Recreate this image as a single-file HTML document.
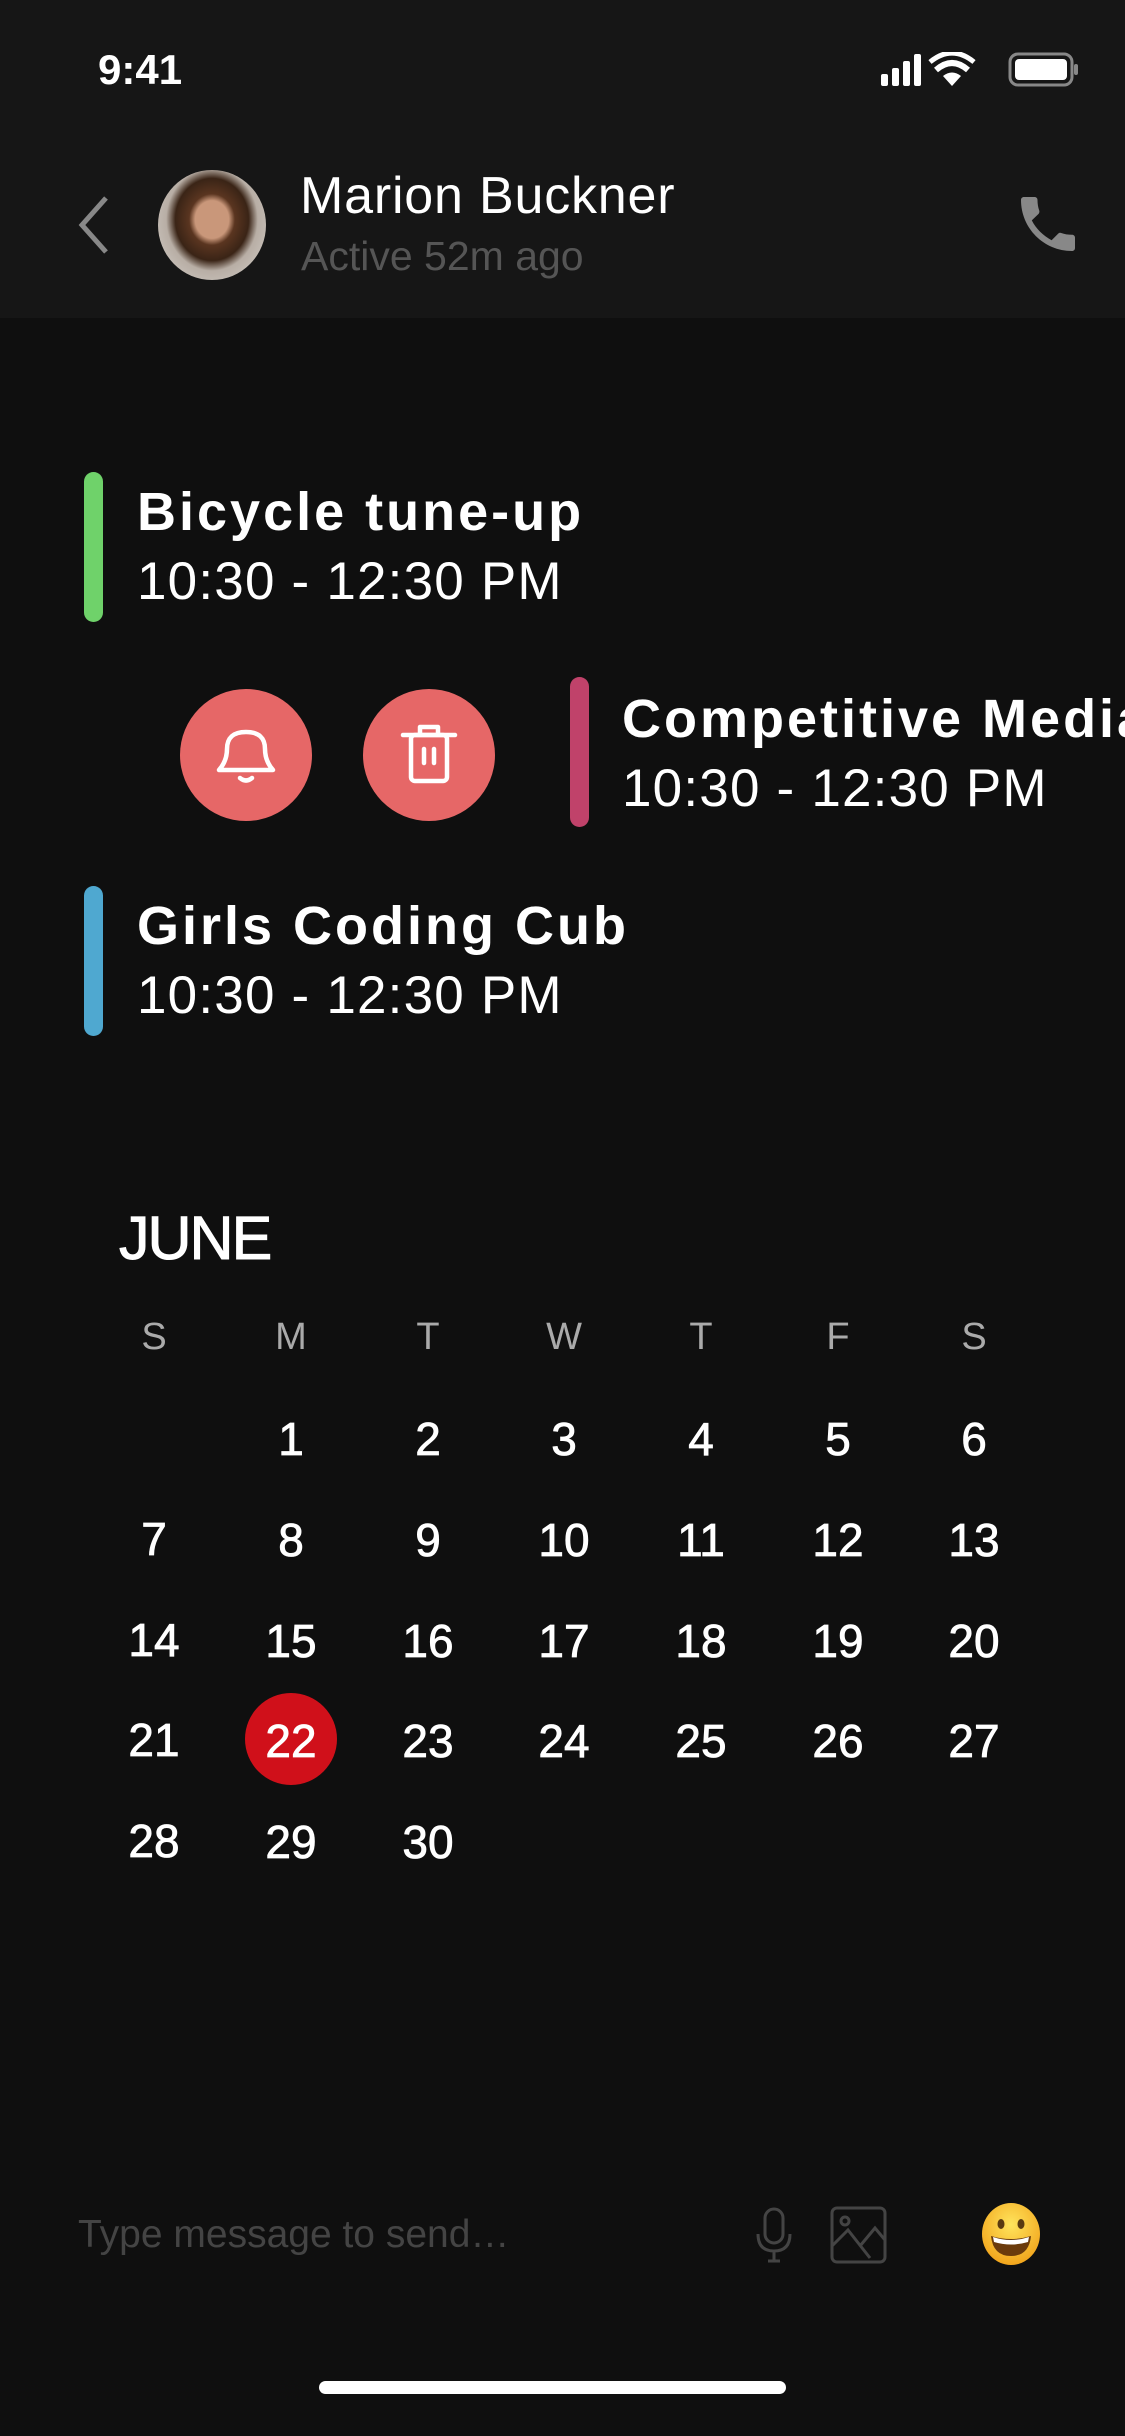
<!DOCTYPE html>
<html><head><meta charset="utf-8"><style>
*{margin:0;padding:0;box-sizing:border-box}
body{width:1125px;height:2436px;background:#0f0f0f;position:relative;overflow:hidden;font-family:"Liberation Sans",sans-serif;color:#fff}
.a{position:absolute}
.hdr{left:0;top:0;width:1125px;height:318px;background:#161616}
.bar{width:19px;border-radius:10px}
.t{font-weight:700;font-size:54px;letter-spacing:3px;white-space:nowrap;line-height:1}
.tm{font-size:53px;letter-spacing:1.2px;white-space:nowrap;line-height:1}
.wd{font-size:38px;color:#aaa;width:100px;text-align:center;line-height:1}
.d{font-size:46px;width:100px;text-align:center;line-height:1;-webkit-text-stroke:0.8px #fff}
.btn{width:132px;height:132px;border-radius:50%;background:#e66767}
</style></head><body>
<div class="a hdr"></div>
<div class="a" style="left:98px;top:46px;font-size:42px;font-weight:600">9:41</div>
<svg class="a" style="left:880px;top:52px" width="200" height="36" viewBox="0 0 200 36">
<rect x="1" y="22" width="7" height="12" rx="2" fill="#fff"/><rect x="12" y="16" width="7" height="18" rx="2" fill="#fff"/><rect x="23" y="9" width="7" height="25" rx="2" fill="#fff"/><rect x="34" y="2" width="7" height="32" rx="2" fill="#fff"/>
<path d="M72 34 L63 24 Q72 17 81 24 Z" fill="#fff"/><path d="M56 18 Q72 4 88 18" stroke="#fff" stroke-width="6" fill="none"/><path d="M50 10 Q72 -8 94 10" stroke="#fff" stroke-width="5" fill="none"/>
<rect x="130" y="2" width="62" height="31" rx="8" stroke="#888" stroke-width="3" fill="none"/><rect x="135" y="7" width="52" height="21" rx="4" fill="#fff"/><rect x="194" y="12" width="4" height="11" rx="2" fill="#888"/>
</svg>
<svg class="a" style="left:74px;top:194px" width="40" height="62"><path d="M32 4 L8 31 L32 58" stroke="#888" stroke-width="5" fill="none"/></svg>
<div class="a" style="left:158px;top:170px;width:108px;height:110px;border-radius:50%;background:radial-gradient(ellipse at 50% 45%,#c9977a 0 22%,#5a3520 30%,#3a2416 48%,#b8aea5 60%,#d8d4cf 100%)"></div>
<div class="a" style="left:300px;top:170px;font-size:52px;letter-spacing:0.8px;line-height:1">Marion Buckner</div>
<div class="a" style="left:301px;top:236px;font-size:41px;color:#555;line-height:1">Active 52m ago</div>
<svg class="a" style="left:1012px;top:188px" width="72" height="72" viewBox="0 0 24 24"><path fill="#888" d="M6.6 10.8c1.4 2.8 3.8 5.1 6.6 6.6l2.2-2.2c.3-.3.7-.4 1-.2 1.1.4 2.3.6 3.6.6.6 0 1 .4 1 1V20c0 .6-.4 1-1 1C10.6 21 3 13.4 3 4c0-.6.4-1 1-1h3.5c.6 0 1 .4 1 1 0 1.3.2 2.5.6 3.6.1.3 0 .7-.2 1z"/></svg>

<div class="a bar" style="left:84px;top:472px;height:150px;background:#6fd26a"></div>
<div class="a t" style="left:137px;top:485px">Bicycle tune-up</div>
<div class="a tm" style="left:137px;top:555px">10:30 - 12:30 PM</div>

<div class="a btn" style="left:180px;top:689px"></div>
<svg class="a" style="left:210px;top:719px" width="72" height="72" viewBox="0 0 72 72"><path d="M9 51 Q17 42 17 30 Q17 13 36 13 Q55 13 55 30 Q55 42 63 51 Z" stroke="#fff" stroke-width="4.5" fill="none" stroke-linejoin="round"/><path d="M30 59 Q36 64 42 59" stroke="#fff" stroke-width="4.5" fill="none" stroke-linecap="round"/></svg>
<div class="a btn" style="left:363px;top:689px"></div>
<svg class="a" style="left:393px;top:719px" width="72" height="72" viewBox="0 0 72 72"><path d="M10 16 H62" stroke="#fff" stroke-width="4.5" stroke-linecap="round"/><path d="M27 16 V8 H45 V16" stroke="#fff" stroke-width="4.5" fill="none" stroke-linejoin="round"/><rect x="18" y="16" width="36" height="46" rx="4" stroke="#fff" stroke-width="4.5" fill="none"/><path d="M31 30 V44 M41 30 V44" stroke="#fff" stroke-width="4.5" stroke-linecap="round"/></svg>
<div class="a bar" style="left:570px;top:677px;height:150px;background:#c0426a"></div>
<div class="a t" style="left:622px;top:692px">Competitive Media</div>
<div class="a tm" style="left:622px;top:762px">10:30 - 12:30 PM</div>

<div class="a bar" style="left:84px;top:886px;height:150px;background:#4fa8d0"></div>
<div class="a t" style="left:137px;top:899px">Girls Coding Cub</div>
<div class="a tm" style="left:137px;top:969px">10:30 - 12:30 PM</div>

<div class="a" style="left:119px;top:1208px;font-size:61px;letter-spacing:-2px;line-height:1;-webkit-text-stroke:1px #fff">JUNE</div>
<div class="a" style="left:245px;top:1693px;width:92px;height:92px;border-radius:50%;background:#d0101a"></div>
<div class="a" style="left:0;top:0">
<div class="a wd" style="left:104px;top:1318px">S</div><div class="a wd" style="left:241px;top:1318px">M</div><div class="a wd" style="left:378px;top:1318px">T</div><div class="a wd" style="left:514px;top:1318px">W</div><div class="a wd" style="left:651px;top:1318px">T</div><div class="a wd" style="left:788px;top:1318px">F</div><div class="a wd" style="left:924px;top:1318px">S</div>

<div class="a d" style="left:241px;top:1416px">1</div><div class="a d" style="left:378px;top:1416px">2</div><div class="a d" style="left:514px;top:1416px">3</div><div class="a d" style="left:651px;top:1416px">4</div><div class="a d" style="left:788px;top:1416px">5</div><div class="a d" style="left:924px;top:1416px">6</div>
<div class="a d" style="left:104px;top:1516px">7</div><div class="a d" style="left:241px;top:1517px">8</div><div class="a d" style="left:378px;top:1517px">9</div><div class="a d" style="left:514px;top:1517px">10</div><div class="a d" style="left:651px;top:1517px">11</div><div class="a d" style="left:788px;top:1517px">12</div><div class="a d" style="left:924px;top:1517px">13</div>
<div class="a d" style="left:104px;top:1617px">14</div><div class="a d" style="left:241px;top:1618px">15</div><div class="a d" style="left:378px;top:1618px">16</div><div class="a d" style="left:514px;top:1618px">17</div><div class="a d" style="left:651px;top:1618px">18</div><div class="a d" style="left:788px;top:1618px">19</div><div class="a d" style="left:924px;top:1618px">20</div>
<div class="a d" style="left:104px;top:1717px">21</div><div class="a d" style="left:241px;top:1718px">22</div><div class="a d" style="left:378px;top:1718px">23</div><div class="a d" style="left:514px;top:1718px">24</div><div class="a d" style="left:651px;top:1718px">25</div><div class="a d" style="left:788px;top:1718px">26</div><div class="a d" style="left:924px;top:1718px">27</div>
<div class="a d" style="left:104px;top:1818px">28</div><div class="a d" style="left:241px;top:1819px">29</div><div class="a d" style="left:378px;top:1819px">30</div>
</div>

<div class="a" style="left:78px;top:2215px;font-size:39px;color:#444;line-height:1">Type message to send…</div>
<svg class="a" style="left:754px;top:2206px" width="40" height="58" viewBox="0 0 40 58"><rect x="11" y="3" width="18" height="34" rx="9" stroke="#444" stroke-width="3" fill="none"/><path d="M4 28 Q4 45 20 45 Q36 45 36 28 M20 45 V55 M14 55 H26" stroke="#444" stroke-width="3" fill="none"/></svg>
<svg class="a" style="left:830px;top:2206px" width="58" height="58" viewBox="0 0 58 58"><rect x="2" y="2" width="53" height="54" rx="5" stroke="#444" stroke-width="3" fill="none"/><circle cx="15" cy="15" r="4" stroke="#444" stroke-width="3" fill="none"/><path d="M2 40 L18 24 L40 52 M30 40 L45 22 L55 34" stroke="#444" stroke-width="3" fill="none"/></svg>
<svg class="a" style="left:979px;top:2202px" width="64" height="64" viewBox="0 0 64 64"><defs><radialGradient id="g" cx="50%" cy="35%" r="65%"><stop offset="0" stop-color="#ffe45c"/><stop offset="1" stop-color="#f2a51c"/></radialGradient></defs><ellipse cx="32" cy="32" rx="29" ry="31" fill="url(#g)"/><ellipse cx="22" cy="22" rx="3.5" ry="5" fill="#5a3a10"/><ellipse cx="42" cy="22" rx="3.5" ry="5" fill="#5a3a10"/><path d="M12 34 Q32 40 52 34 Q50 54 32 54 Q14 54 12 34Z" fill="#6b3b0c"/><path d="M14 35 Q32 41 50 35 L49 40 Q32 45 15 40Z" fill="#fff"/></svg>
<div class="a" style="left:319px;top:2381px;width:467px;height:13px;border-radius:7px;background:#fff"></div>
</body></html>
